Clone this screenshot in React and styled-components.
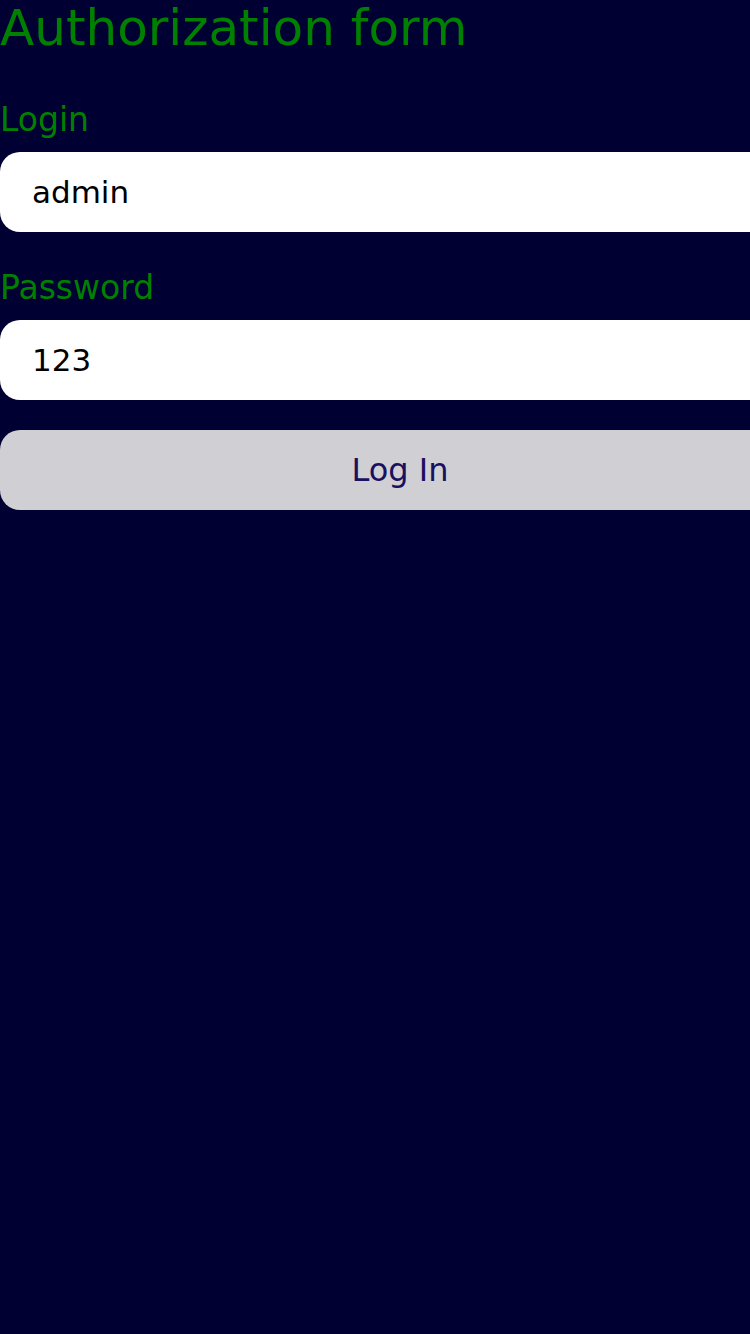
import React from "react";
import styled, { createGlobalStyle } from "styled-components";

const Global = createGlobalStyle`
  html, body { margin: 0; padding: 0; background: #000033; overflow: hidden; }
  body { font-family: "DejaVu Sans", "Noto Sans", sans-serif; }
`;

const Page = styled.div`
  min-height: 1334px;
  background: #000033;
  display: flex;
  flex-direction: column;
  width: 800px;
`;

const Title = styled.h1`
  margin: 0;
  font-weight: 400;
  font-size: 50px;
  line-height: 56px;
  color: #008000;
`;

const Form = styled.form`
  display: flex;
  flex-direction: column;
  margin-top: 44px;
`;

const Label = styled.label`
  font-size: 33px;
  line-height: 40px;
  color: #008000;
  margin-bottom: 12px;
  margin-top: ${(p) => (p.$first ? "0" : "36px")};
`;

const Input = styled.input`
  box-sizing: border-box;
  width: 800px;
  height: 80px;
  border: none;
  outline: none;
  border-radius: 20px;
  background: #ffffff;
  padding: 0 32px;
  font-family: inherit;
  font-size: 31px;
  color: #000000;
`;

const Button = styled.button`
  box-sizing: border-box;
  width: 800px;
  height: 80px;
  margin-top: 30px;
  border: none;
  border-radius: 20px;
  background: #d0cfd4;
  color: #1a1060;
  font-family: inherit;
  font-size: 32px;
`;

export default function App() {
  return (
    <>
      <Global />
      <Page>
        <Title>Authorization form</Title>
        <Form onSubmit={(e) => e.preventDefault()}>
          <Label $first htmlFor="login">Login</Label>
          <Input id="login" defaultValue="admin" />
          <Label htmlFor="password">Password</Label>
          <Input id="password" defaultValue="123" />
          <Button type="submit">Log In</Button>
        </Form>
      </Page>
    </>
  );
}
